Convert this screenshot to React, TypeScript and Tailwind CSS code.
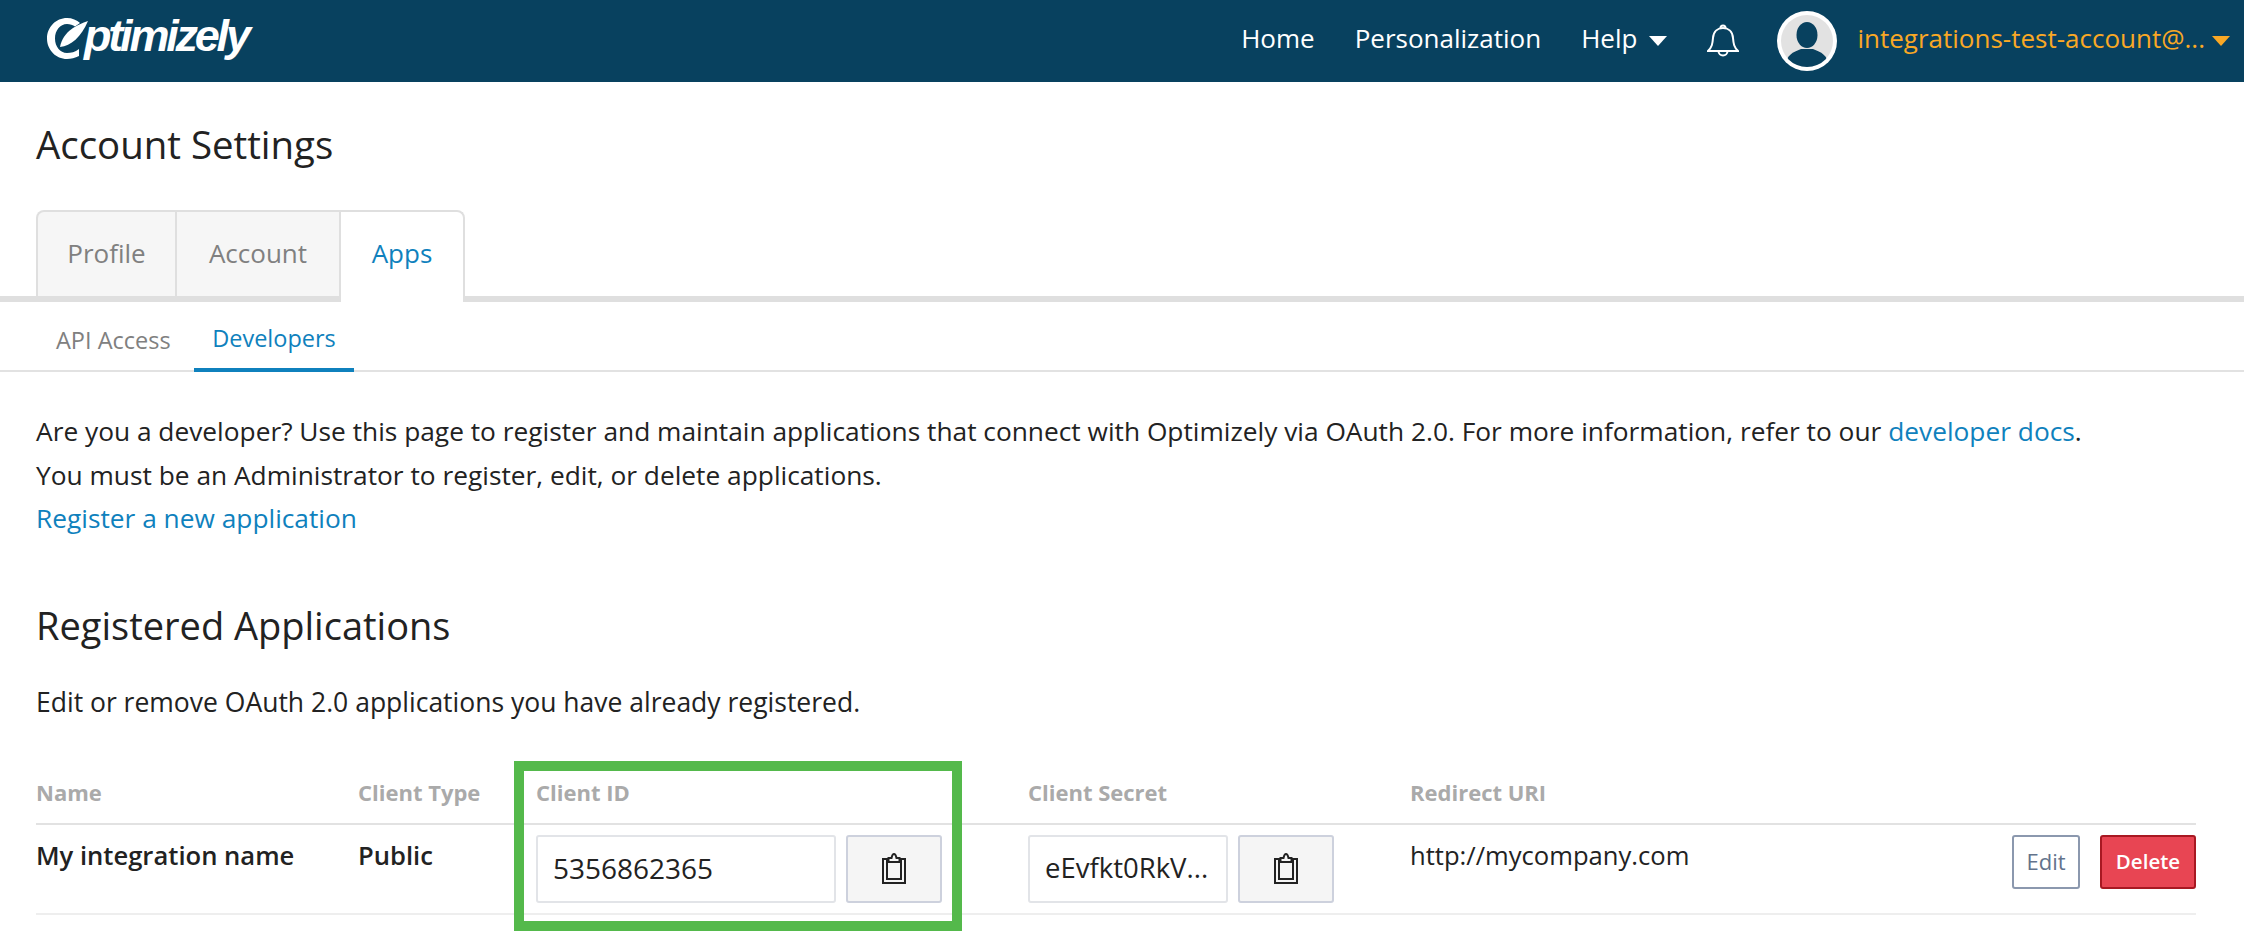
import React from 'react';

const ClipboardIcon = () => (
  <svg width="26" height="33" viewBox="0 0 26 33" fill="none" stroke="#222" strokeWidth="2">
    <path d="M7 7H2V31H24V7H19" />
    <path d="M6 7V27H20V7" />
    <path d="M7.500 10V6H10.500C11 3.500 12 2 13 2S15 3.500 15.500 6H18.500V10Z" />
  </svg>
);

const Caret = ({ color }: { color: string }) => (
  <svg width="18" height="10" viewBox="0 0 18 10">
    <path d="M0 0H18L9 10Z" fill={color} />
  </svg>
);

const Logo = () => (
  <div className="flex items-start w-[206px] h-[46px]">
    <svg width="44" height="42" viewBox="0 0 44 42" className="shrink-0">
      <path
        fillRule="evenodd"
        d="M20 0C9 0 0 9 0 20.500S9 41 20 41C24 41 28 40 32 38V31C28 34 24 35 20 35C13 35 8 28.500 8 20.500S13 6 20 6C23 6 26 7 28 8.500L33 5C30 2 25 0 20 0Z"
        fill="#fff"
      />
      <path d="M41 3C30 7 16 13 13 29C24 28 34 19 41 3Z" fill="#fff" />
    </svg>
    <span className="-ml-[7px] -mt-[10px] font-['Liberation_Sans',sans-serif] text-[45px] leading-[56px] font-bold italic tracking-[-3.200px] text-white">
      ptimizely
    </span>
  </div>
);

const Header = () => (
  <header className="h-[82px] bg-[#08415f] flex items-center justify-between pl-[47px] pr-[14px]">
    <Logo />
    <nav className="flex items-center text-[26px] text-white">
      <a className="pb-[5px]">Home</a>
      <a className="ml-[40px] pb-[5px]">Personalization</a>
      <a className="ml-[40px] pb-[5px]">Help</a>
      <span className="ml-[12px]">
        <Caret color="#fff" />
      </span>
      <svg className="ml-[40px]" width="32" height="34" viewBox="0 0 32 34" fill="none" stroke="#fff" strokeWidth="2">
        <path d="M1 27H31C27 23 26.500 20 26 14C25.500 7 21 4 16 4S6.500 7 6 14C5.500 20 5 23 1 27Z" />
        <path d="M13.500 4C13.500 0.500 18.500 0.500 18.500 4" />
        <path d="M11.500 27C11.500 33 20.500 33 20.500 27" />
      </svg>
      <svg className="ml-[38px]" width="60" height="60" viewBox="0 0 60 60">
        <circle cx="30" cy="30" r="30" fill="#fff" />
        <circle cx="30" cy="30" r="26" fill="#e2e2e2" />
        <clipPath id="avatar-clip">
          <circle cx="30" cy="30" r="26" />
        </clipPath>
        <g clipPath="url(#avatar-clip)" fill="#08415f">
          <ellipse cx="30" cy="24" rx="10.500" ry="13" />
          <path d="M8 56C9 44 16 41 24 38H36C44 41 51 44 52 56Z" />
        </g>
      </svg>
      <span className="ml-[20px] pb-[5px] text-[#f9a825]">integrations-test-account@...</span>
      <span className="ml-[7px]">
        <Caret color="#f9a825" />
      </span>
    </nav>
  </header>
);

const Tabs = () => (
  <div className="mt-[44px] flex pl-9 h-[92px] border-b-[6px] border-[#dfdfdf] text-[26px]">
    <div className="w-[141px] h-[86px] bg-[#f6f6f6] border-2 border-b-0 border-[#dfdfdf] rounded-tl-lg flex items-center justify-center pb-[2px] text-[#808080]">
      Profile
    </div>
    <div className="w-[164px] h-[86px] bg-[#f6f6f6] border-t-2 border-r-2 border-[#dfdfdf] flex items-center justify-center pb-[2px] text-[#808080]">
      Account
    </div>
    <div className="w-[124px] h-[92px] bg-white border-t-2 border-r-2 border-[#dfdfdf] rounded-tr-lg flex items-center justify-center text-[#0f81bd] pb-[8px]">
      Apps
    </div>
  </div>
);

const SubNav = () => (
  <div className="flex pl-9 h-[70px] border-b-2 border-[#e2e2e2] text-[23.500px]">
    <div className="w-[158px] pl-5 h-[70px] flex items-center pt-[7px] text-[#808080]">API Access</div>
    <div className="w-[160px] h-[70px] border-b-4 border-[#0f81bd] flex items-center justify-center pt-2 text-[#0f81bd]">
      Developers
    </div>
  </div>
);

const CopyField = ({ value, className }: { value: string; className: string }) => (
  <div className="flex gap-[10px]">
    <div className={`${className} h-[68px] bg-white border-2 border-[#e2e4e8] rounded-[3px] flex items-center pl-[15px] pb-[2px] text-[#222]`}>
      {value}
    </div>
    <button className="w-[96px] h-[68px] bg-[#f5f5f5] border-2 border-[#cdd1dd] rounded-[3px] flex items-center justify-center">
      <ClipboardIcon />
    </button>
  </div>
);

const AppsTable = () => (
  <div className="mt-[38px]">
    <div className="grid grid-cols-[322px_178px_492px_382px_1fr] h-[63px] items-start pt-[17px] border-b-2 border-[#e2e2e2] text-[22px] leading-[26px] font-bold text-[#aaaaaa]">
      <div>Name</div>
      <div>Client Type</div>
      <div>Client ID</div>
      <div>Client Secret</div>
      <div>Redirect URI</div>
    </div>
    <div className="grid grid-cols-[322px_178px_492px_382px_1fr] h-[90px] pt-[10px] border-b-2 border-[#eeeeee] text-[25.600px] text-[#222]">
      <div className="font-semibold pt-[5px] leading-[32px]">My integration name</div>
      <div className="font-semibold pt-[5px] leading-[32px]">Public</div>
      <CopyField value="5356862365" className="w-[300px] text-[28px]" />
      <CopyField value="eEvfkt0RkV..." className="w-[200px] text-[27.500px]" />
      <div className="flex justify-between">
        <div className="pt-[5px] leading-[32px]">http://mycompany.com</div>
        <div className="flex gap-5">
          <button className="w-[68px] h-[54px] border-2 border-[#8b98ae] rounded-[3px] text-[22px] text-[#63738c]">Edit</button>
          <button className="w-[96px] h-[54px] bg-[#e84553] border-2 border-[#a81822] rounded-[3px] text-[20.500px] font-semibold text-white">Delete</button>
        </div>
      </div>
    </div>
  </div>
);

export default function App() {
  return (
    <div className="relative w-[2244px] h-[932px] overflow-hidden bg-white font-['Open_Sans',sans-serif] text-[#222]">
      <Header />
      <h1 className="pl-9 pt-[40px] text-[38.400px] leading-[44px] font-normal">Account Settings</h1>
      <Tabs />
      <SubNav />
      <main className="px-9 pr-[48px]">
        <div className="mt-[38px] text-[26.300px] leading-[43.500px]">
          <p>
            Are you a developer? Use this page to register and maintain applications that connect with Optimizely via OAuth 2.0. For more information, refer to our{' '}
            <a className="text-[#0f81bd]">developer docs</a>.
          </p>
          <p>You must be an Administrator to register, edit, or delete applications.</p>
          <p>
            <a className="text-[#0f81bd]">Register a new application</a>
          </p>
        </div>
        <h2 className="mt-[62px] text-[38px] leading-[44px] font-normal">Registered Applications</h2>
        <p className="mt-[33px] text-[26.500px] leading-[44px]">Edit or remove OAuth 2.0 applications you have already registered.</p>
        <AppsTable />
      </main>
      {/* green callout drawn over the screenshot */}
      <div className="absolute left-[514px] top-[761px] w-[448px] h-[170px] border-[10px] border-[#54b94b]" />
    </div>
  );
}
